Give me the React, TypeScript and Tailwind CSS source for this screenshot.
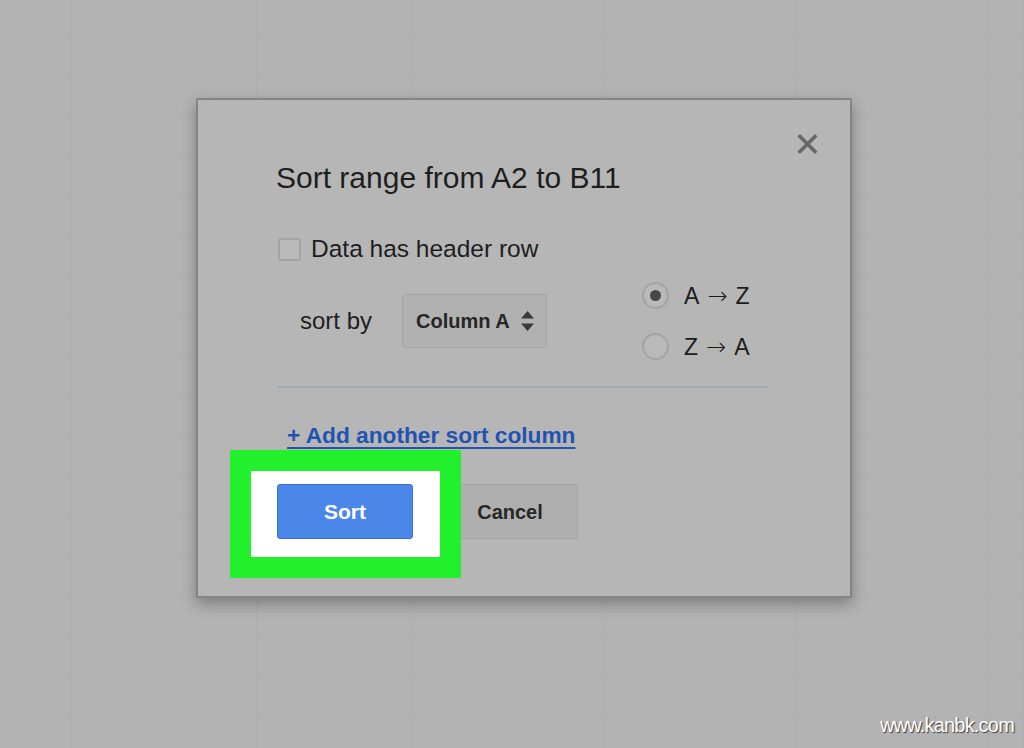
import React from "react";

const COLS = [72, 185, 157, 192, 191, 193, 34];
const ROWS = Array.from({ length: 19 }, (_, i) => (i === 0 ? 38 : 40));

function SheetGrid() {
  return (
    <div className="flex flex-col">
      {ROWS.map((h, r) => (
        <div key={r} className="flex border-b border-[#aeaeae]" style={{ height: h }}>
          {COLS.map((w, c) => (
            <div key={c} className="shrink-0 border-r border-[#aeaeae]" style={{ width: w }} />
          ))}
        </div>
      ))}
    </div>
  );
}

function Radio({ checked, from, to }: { checked?: boolean; from: string; to: string }) {
  return (
    <label className="flex items-center gap-[15px]">
      <span className="w-[27px] h-[27px] rounded-full border-2 border-[#a3a3a3] bg-[#b9b9b9] flex items-center justify-center">
        {checked && <span className="w-[11px] h-[11px] rounded-full bg-[#474747]" />}
      </span>
      <span className="flex items-center text-[23px] leading-[26px] text-[#1c1c1c]">
        {from}
        <span className="mx-[8px] text-[24px] leading-[26px] font-light" style={{ fontFamily: '"DejaVu Sans", sans-serif' }}>→</span>
        {to}
      </span>
    </label>
  );
}

export default function App() {
  return (
    <div
      className="relative w-[1024px] h-[748px] overflow-hidden bg-[#b3b3b3]"
      style={{ fontFamily: '"Liberation Sans", Arial, sans-serif' }}
    >
      <SheetGrid />

      {/* dialog */}
      <div className="absolute left-[196px] top-[98px] w-[656px] h-[500px] border-2 border-[#858585] bg-[#b6b6b6] shadow-[0_6px_14px_rgba(0,0,0,0.3)]">
        <button className="absolute top-[33px] right-[32px] w-[21px] h-[22px] blur-[0.6px]">
          <svg viewBox="0 0 21 22" className="w-full h-full">
            <path d="M3 3.5 L18 18.5 M18 3.5 L3 18.5" stroke="#676767" strokeWidth="3.6" strokeLinecap="square" />
          </svg>
        </button>

        <div className="flex flex-col items-start pl-[78px] pt-[62px]">
          <h1 className="text-[30px] leading-[32px] text-[#1e1e1e]">Sort range from A2 to B11</h1>

          <label className="mt-[43px] ml-[2px] flex items-center gap-[10px] h-6">
            <span className="w-[23px] h-[23px] rounded-[3px] border-2 border-[#a3a3a3] bg-[#b9b9b9]" />
            <span className="text-[24.5px] leading-[24px] text-[#1e1e1e]">Data has header row</span>
          </label>

          <div className="mt-[21px] flex items-center">
            <span className="ml-[24px] text-[24px] leading-[28px] text-[#1e1e1e]">sort by</span>
            <div className="ml-[30px] w-[145px] h-[54px] rounded-[4px] border border-[#a4a4a4] bg-[#b1b1b1] flex items-center pl-[13px]">
              <span className="text-[20px] font-bold text-[#262626]">Column A</span>
              <svg viewBox="0 0 15 20" className="ml-[10px] w-[15px] h-[20px]">
                <path d="M7.5 0 L14 7.5 H1 Z M7.5 20 L14 12.5 H1 Z" fill="#3a3a3a" />
              </svg>
            </div>
            <div className="ml-[95px] flex flex-col gap-[24px]">
              <Radio checked from="A" to="Z" />
              <Radio from="Z" to="A" />
            </div>
          </div>

          <div className="mt-[26px] ml-[2px] w-[490px] h-[2px] bg-[#9fa7b5]" />

          <a className="mt-[34px] ml-[11px] text-[22.7px] leading-[26px] font-bold text-[#2252b2] underline decoration-2 underline-offset-[4px]">
            + Add another sort column
          </a>

          <div className="relative mt-[36px] ml-[1px] flex gap-[29px]">
            <div className="absolute left-[-47px] top-[-34px] w-[231px] h-[128px] border-[21px] border-[#22f02c] bg-white z-[1]" />
            <button className="relative z-[2] w-[136px] h-[55px] rounded-[3px] border border-[#3b6fd1] bg-[#4b87e8] text-white text-[21px] font-bold">
              Sort
            </button>
            <button className="w-[136px] h-[55px] rounded-[3px] border border-[#a3a3a3] bg-[#afafaf] text-[#272727] text-[20px] font-bold">
              Cancel
            </button>
          </div>
        </div>
      </div>

      <div className="absolute right-[10px] bottom-[8px] text-[20px] text-white tracking-[-0.8px] [text-shadow:1px_1px_1px_#3a3a3a]">
        www.kanbk.com
      </div>
    </div>
  );
}
